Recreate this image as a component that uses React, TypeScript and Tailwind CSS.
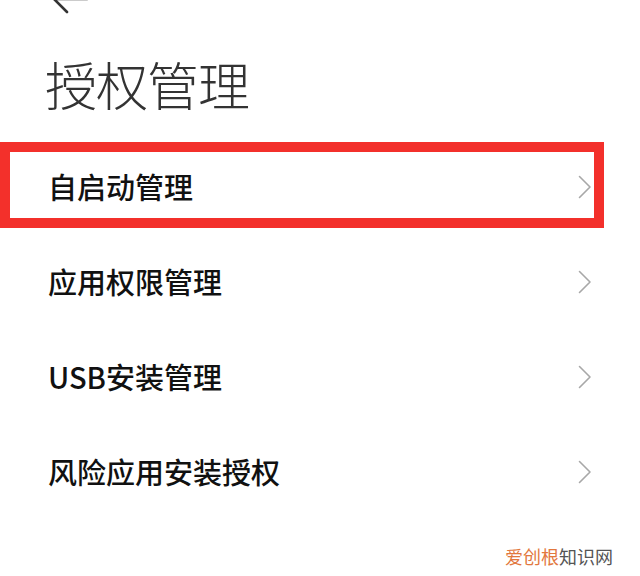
const items = ['自启动管理', '应用权限管理', 'USB安装管理', '风险应用安装授权']

function Chevron() {
  return (
    <svg width="14" height="24" viewBox="0 0 14 24" fill="none" className="shrink-0">
      <polyline points="1.5,1.5 12,12 1.5,22.5" stroke="#a8a8a8" strokeWidth="1.6" strokeLinecap="round" strokeLinejoin="round" />
    </svg>
  )
}

export default function App() {
  return (
    <div className="relative w-[640px] h-[576px] overflow-hidden bg-white" style={{ fontFamily: '"Noto Sans CJK SC", "Noto Sans", sans-serif' }}>
      <div className="h-[16px] pl-[51px] overflow-hidden">
        <svg width="38" height="34" viewBox="0 0 38 34" fill="none" className="-mt-[18px]">
          <path d="M36 17H3M3 17L16 4M3 17L16 30" stroke="#333" strokeWidth="2.6" strokeLinecap="round" strokeLinejoin="round" />
        </svg>
      </div>

      <h1 className="pl-[45px] pt-[42px] text-[52px] leading-none font-light text-[#333] tracking-[-1px]">授权管理</h1>

      <ul className="mt-[29px]">
        {items.map((label, i) => (
          <li key={label} className="relative h-[95px] flex items-center justify-between pl-[48px] pr-[48px]">
            <span className="text-[29px] font-medium text-[#111]">{label}</span>
            <Chevron />
            {i === 0 && (
              <div className="absolute left-0 top-[3px] w-[604px] h-[86px] border-[10px] border-[#f3302b]" />
            )}
          </li>
        ))}
      </ul>

      <div className="absolute right-[27px] bottom-[11px] text-[18px] leading-none">
        <span className="text-[#e2773d]">爱创根</span>
        <span className="text-[#555]">知识网</span>
      </div>
    </div>
  )
}
